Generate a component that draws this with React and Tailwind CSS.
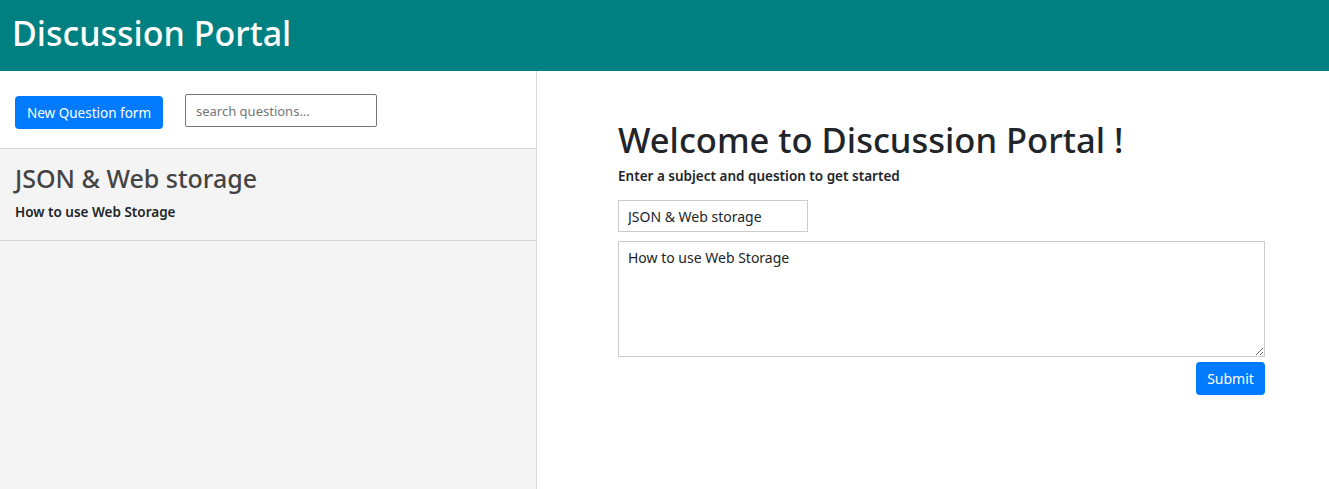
export default function App() {
  return (
    <div className="h-[489px] flex flex-col bg-white text-[#212529] font-['Noto_Sans','Open_Sans',sans-serif]">
      <header className="h-[71px] shrink-0 bg-[#008080] flex items-center px-3">
        <h1 className="text-white text-[34px] font-medium leading-none -mt-[6px]">Discussion Portal</h1>
      </header>
      <div className="flex flex-1 min-h-0">
        {/* Sidebar */}
        <aside className="w-[537px] shrink-0 border-r border-[#dcdcdc] bg-[#f4f4f4] flex flex-col">
          <div className="h-[78px] bg-white border-b border-[#d4d4d4] flex items-center px-[15px] gap-[22px]">
            <button className="h-[33px] w-[148px] mt-[6px] pt-[2px] rounded bg-[#007bff] text-white text-[13.5px]">
              New Question form
            </button>
            <input
              placeholder="search questions..."
              className="h-[33px] w-[192px] mt-[2px] border border-[#767676] rounded-[2px] px-[10px] text-[13px] placeholder:text-[#757575] outline-none"
            />
          </div>
          <div className="h-[92px] border-b border-[#d4d4d4] px-[15px] pt-[13px]">
            <h3 className="text-[25px] font-medium text-[#444] leading-[32px]">JSON &amp; Web storage</h3>
            <p className="text-[13.5px] font-semibold mt-[8px]">How to use Web Storage</p>
          </div>
        </aside>
        {/* Form */}
        <main className="flex-1 pl-[81px] pr-[64px] pt-[46px]">
          <h2 className="text-[34.5px] font-medium leading-[46px]">Welcome to Discussion Portal !</h2>
          <p className="text-[13.5px] font-semibold mt-[3px]">Enter a subject and question to get started</p>
          <input
            defaultValue="JSON & Web storage"
            className="mt-[14px] block h-[32px] w-[190px] border border-[#ccc] px-[9px] text-[14px] outline-none"
          />
          <textarea
            defaultValue="How to use Web Storage"
            className="mt-[9px] block h-[116px] w-full border border-[#ccc] px-[9px] py-[5px] text-[14px] outline-none"
          />
          <div className="flex justify-end mt-[5px]">
            <button className="h-[33px] w-[69px] rounded bg-[#007bff] text-white text-[14px]">Submit</button>
          </div>
        </main>
      </div>
    </div>
  );
}
